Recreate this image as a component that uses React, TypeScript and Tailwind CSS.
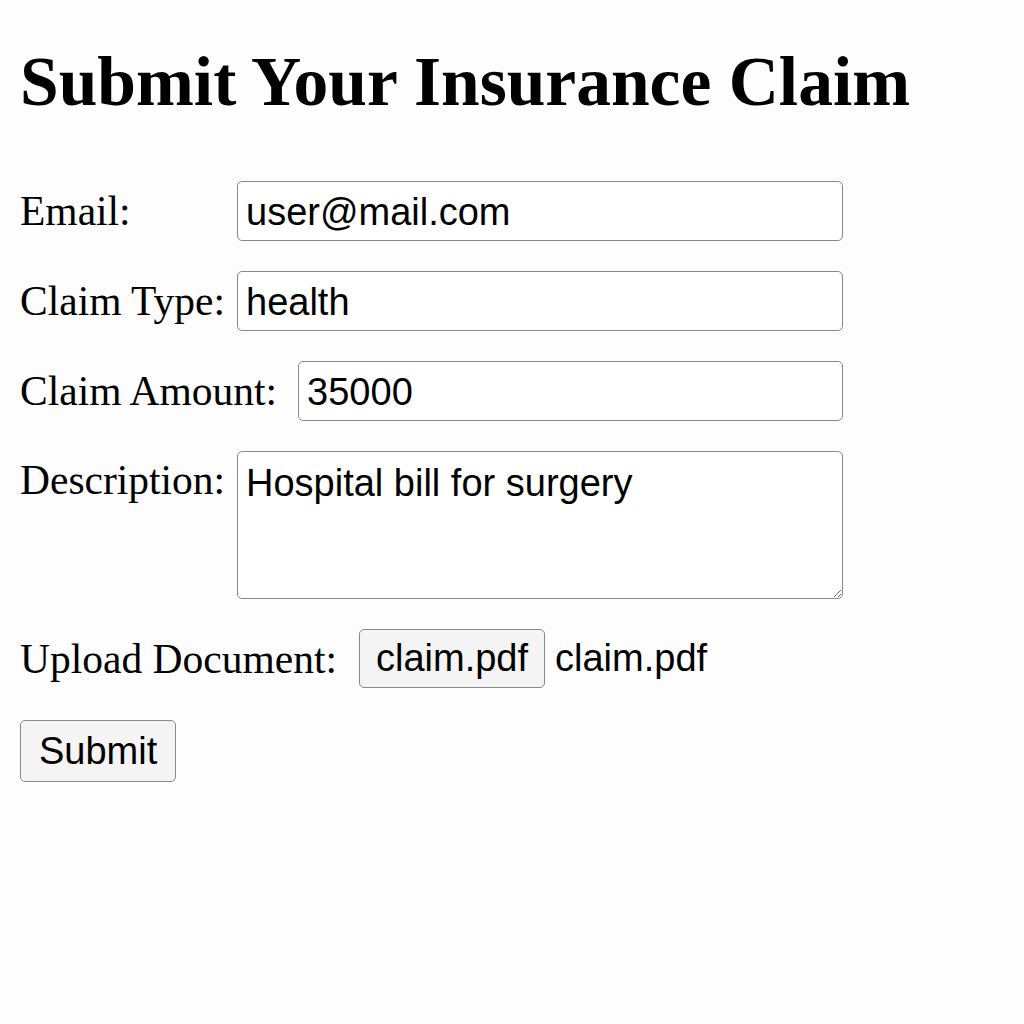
import React, { useState } from "react";

const serif = "font-['Liberation_Serif','Times_New_Roman',serif]";
const sans = "font-['Liberation_Sans',Arial,sans-serif]";

export default function App() {
  const [email, setEmail] = useState("user@mail.com");
  const [claimType, setClaimType] = useState("health");
  const [amount, setAmount] = useState("35000");
  const [description, setDescription] = useState("Hospital bill for surgery");

  return (
    <div className={`min-h-screen w-full bg-[#fdfdfd] text-black ${serif}`}>
      <div className="px-[20px] pt-[42px]">
        <h1 className="text-[69.5px] font-bold leading-[80px]">Submit Your Insurance Claim</h1>

        <form className="mt-[59px] flex w-[823px] flex-col" onSubmit={(e) => e.preventDefault()}>
          <div className="flex items-center">
            <label className="w-[217px] text-[41.5px] leading-[48px]">Email:</label>
            <input
              value={email}
              onChange={(e) => setEmail(e.target.value)}
              className={`h-[60px] flex-1 rounded-[5px] border border-[#8a8a8a] bg-white px-[8px] pt-[3px] text-[38px] outline-none ${sans}`}
            />
          </div>

          <div className="mt-[30px] flex items-center">
            <label className="w-[217px] text-[41.5px] leading-[48px]">Claim Type:</label>
            <input
              value={claimType}
              onChange={(e) => setClaimType(e.target.value)}
              className={`h-[60px] flex-1 rounded-[5px] border border-[#8a8a8a] bg-white px-[8px] pt-[3px] text-[38px] outline-none ${sans}`}
            />
          </div>

          <div className="mt-[30px] flex items-center">
            <label className="mr-[21px] text-[41.5px] leading-[48px]">Claim Amount:</label>
            <input
              value={amount}
              onChange={(e) => setAmount(e.target.value)}
              className={`h-[60px] flex-1 rounded-[5px] border border-[#8a8a8a] bg-white px-[8px] pt-[3px] text-[38px] outline-none ${sans}`}
            />
          </div>

          <div className="mt-[30px] flex items-start">
            <label className="w-[217px] pt-[5px] text-[41.5px] leading-[48px]">Description:</label>
            <textarea
              value={description}
              onChange={(e) => setDescription(e.target.value)}
              className={`h-[148px] flex-1 rounded-[5px] border border-[#8a8a8a] bg-white px-[8px] py-[9px] text-[38px] leading-[44px] outline-none ${sans}`}
            />
          </div>

          <div className="mt-[30px] flex items-center">
            <label className="mr-[22px] text-[41.5px] leading-[48px]">Upload Document:</label>
            <button
              type="button"
              className={`h-[59px] rounded-[5px] border border-[#8a8a8a] bg-[#f4f4f4] px-[16px] text-[38px] ${sans}`}
            >
              claim.pdf
            </button>
            <span className={`ml-[10px] text-[38px] ${sans}`}>claim.pdf</span>
          </div>

          <div className="mt-[32px] flex">
            <button
              type="submit"
              className={`h-[62px] rounded-[5px] border border-[#8a8a8a] bg-[#f4f4f4] px-[18px] text-[38px] ${sans}`}
            >
              Submit
            </button>
          </div>
        </form>
      </div>
    </div>
  );
}
